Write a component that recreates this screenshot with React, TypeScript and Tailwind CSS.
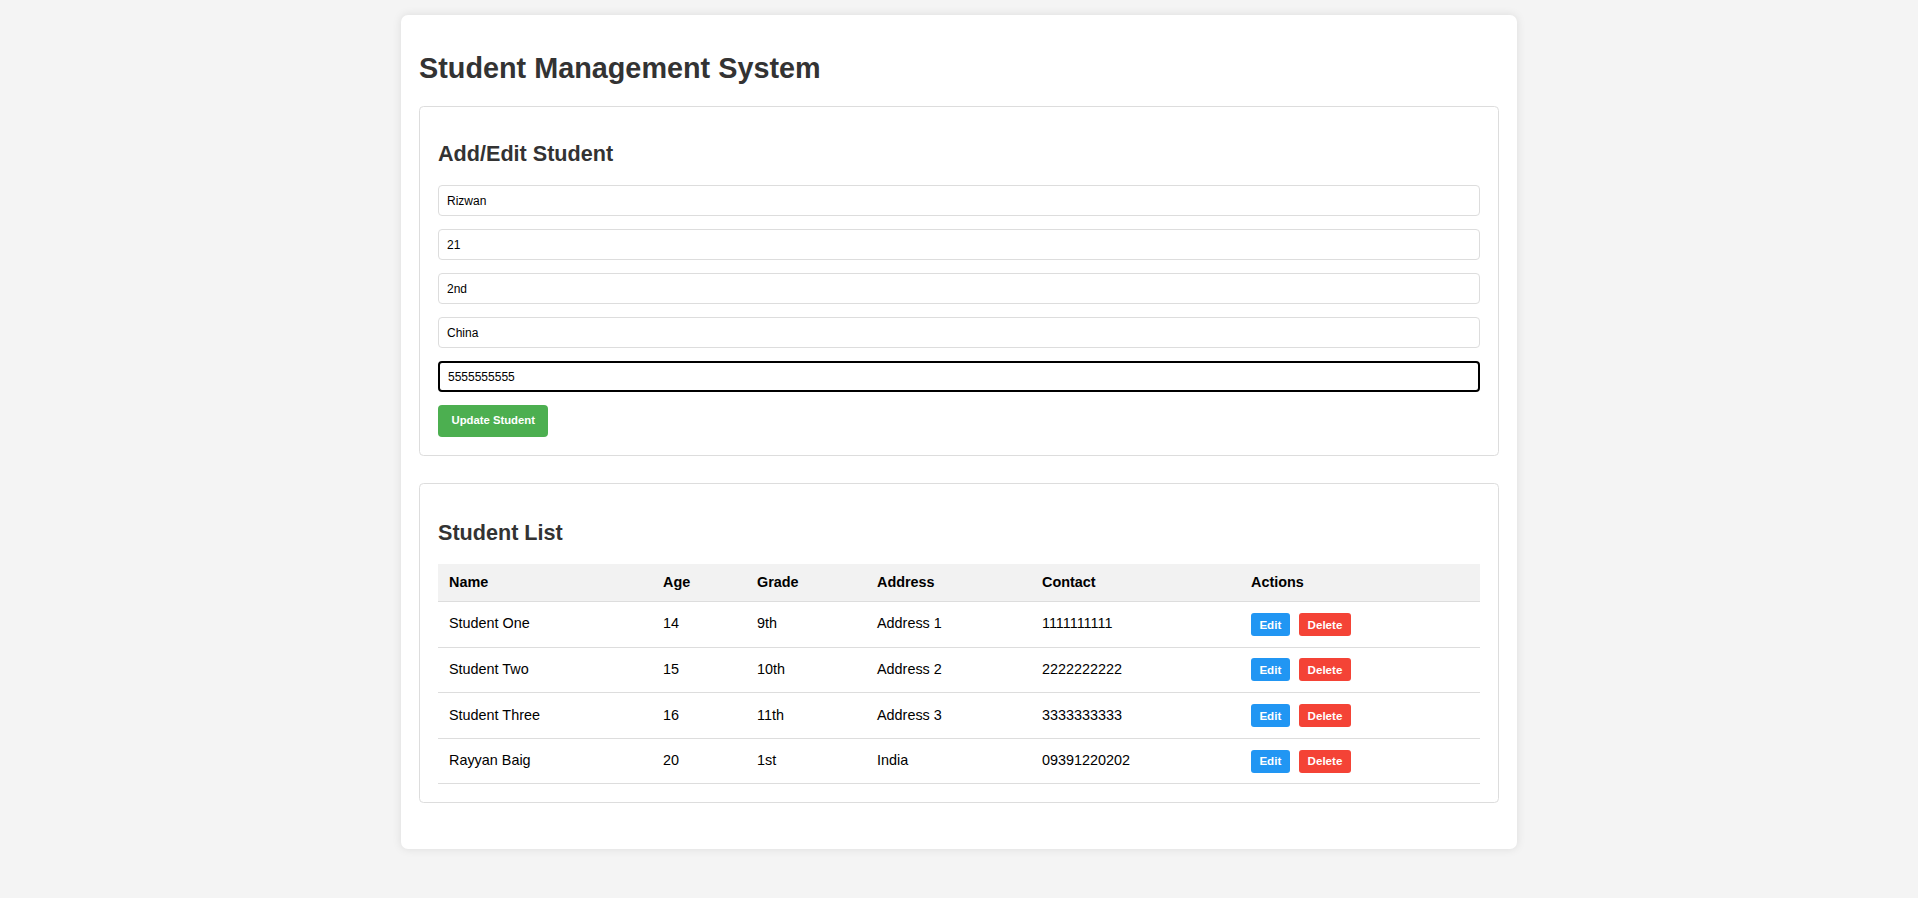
import { useState } from "react";

type Student = {
  name: string;
  age: string;
  grade: string;
  address: string;
  contact: string;
};

const STUDENTS: Student[] = [
  { name: "Student One", age: "14", grade: "9th", address: "Address 1", contact: "1111111111" },
  { name: "Student Two", age: "15", grade: "10th", address: "Address 2", contact: "2222222222" },
  { name: "Student Three", age: "16", grade: "11th", address: "Address 3", contact: "3333333333" },
  { name: "Rayyan Baig", age: "20", grade: "1st", address: "India", contact: "09391220202" },
];

const COLS: { label: string; width: string }[] = [
  { label: "Name", width: "w-[214px]" },
  { label: "Age", width: "w-[94px]" },
  { label: "Grade", width: "w-[120px]" },
  { label: "Address", width: "w-[165px]" },
  { label: "Contact", width: "w-[209px]" },
  { label: "Actions", width: "w-[240px]" },
];

export default function App() {
  const [form, setForm] = useState({
    name: "Rizwan",
    age: "21",
    grade: "2nd",
    address: "China",
    contact: "5555555555",
  });

  const fields: (keyof typeof form)[] = ["name", "age", "grade", "address", "contact"];

  return (
    <div className="min-h-[898px] bg-[#f4f4f4] pt-[15px] font-['Liberation_Sans',Arial,sans-serif]">
      <div className="mx-auto w-[1116px] rounded-[7px] bg-white px-[18px] pt-[18px] pb-[18px] shadow-[0_0_10px_rgba(0,0,0,0.1)]">
        <h1 className="mt-[19px] mb-[21.5px] text-[28.8px] leading-[32px] font-bold text-[#333]">
          Student Management System
        </h1>

        <div className="mb-[27.5px] rounded-[4.5px] border border-[#ddd] p-[18px]">
          <h2 className="mt-[17px] mb-[19.5px] text-[21.6px] leading-[24px] font-bold text-[#333]">
            Add/Edit Student
          </h2>
          {fields.map((f) => (
            <input
              key={f}
              value={form[f]}
              onChange={(e) => setForm({ ...form, [f]: e.target.value })}
              className={`mb-[13px] block h-[31px] w-full rounded-[4px] px-[8px] text-[12px] text-black outline-none ${
                f === "contact" ? "border-2 border-black px-[7px]" : "border border-[#ddd]"
              }`}
            />
          ))}
          <button
            type="button"
            className="h-[31.5px] rounded-[4px] bg-[#4caf50] px-[13.5px] text-[11.3px] font-bold text-white"
          >
            Update Student
          </button>
        </div>

        <div className="mb-[27.5px] rounded-[4.5px] border border-[#ddd] p-[18px]">
          <h2 className="mt-[19px] mb-[19px] text-[21.6px] leading-[24px] font-bold text-[#333]">
            Student List
          </h2>
          <table className="w-full table-fixed border-collapse text-left text-[14.4px] text-black">
            <thead>
              <tr className="bg-[#f2f2f2]">
                {COLS.map((c) => (
                  <th
                    key={c.label}
                    className={`${c.width} h-[37.5px] border-b border-[#ddd] px-[11px] py-0 align-middle font-bold`}
                  >
                    {c.label}
                  </th>
                ))}
              </tr>
            </thead>
            <tbody>
              {STUDENTS.map((s) => (
                <tr key={s.name} className="border-b border-[#ddd]">
                  <td className="h-[45.6px] px-[11px] py-0 align-middle">{s.name}</td>
                  <td className="px-[11px] align-middle">{s.age}</td>
                  <td className="px-[11px] align-middle">{s.grade}</td>
                  <td className="px-[11px] align-middle">{s.address}</td>
                  <td className="px-[11px] align-middle">{s.contact}</td>
                  <td className="px-[11px] align-middle">
                    <div className="flex items-center gap-[9.3px]">
                      <button
                        type="button"
                        className="h-[23px] rounded-[3px] bg-[#2196f3] px-[8.4px] text-[11.6px] font-bold text-white"
                      >
                        Edit
                      </button>
                      <button
                        type="button"
                        className="h-[23px] rounded-[3px] bg-[#f44336] px-[8.6px] text-[11.6px] font-bold text-white"
                      >
                        Delete
                      </button>
                    </div>
                  </td>
                </tr>
              ))}
            </tbody>
          </table>
        </div>
      </div>
    </div>
  );
}
